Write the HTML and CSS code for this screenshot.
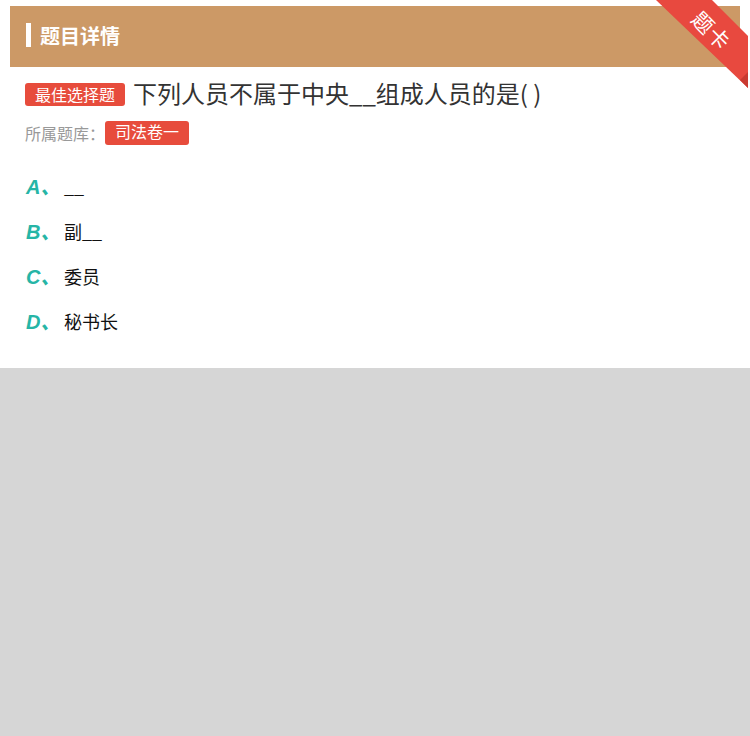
FILE: index.html
```html
<!DOCTYPE html>
<html lang="zh-CN">
<head>
    <meta charset="UTF-8">
    <meta name="viewport" content="width=device-width, initial-scale=1.0">
    <title>题目详情</title>
    <link rel="stylesheet" href="styles.css">
</head>
<body>
    <div id="page">
        <div class="header">
            <span class="bar"></span>
            <h1>题目详情</h1>
        </div>
        <svg class="ribbon" width="100" height="95" viewBox="0 0 100 95">
            <polygon points="6,0 62,0 98,36 98,88" fill="#e8493f"/>
            <polygon points="90,80 98,88 98,72" fill="#c93a31"/>
            <text x="62" y="30" transform="rotate(45 62 30)" text-anchor="middle" dominant-baseline="central" class="ribbon-text">题卡</text>
        </svg>

        <div class="content">
            <div class="question">
                <span class="tag">最佳选择题</span>
                <span class="qtext">下列人员不属于中央__组成人员的是(&nbsp;)</span>
            </div>
            <div class="source">
                <span class="label">所属题库：</span>
                <span class="tag tag-small">司法卷一</span>
            </div>

            <ul class="options">
                <li><span class="letter">A、</span><span class="otext">__</span></li>
                <li><span class="letter">B、</span><span class="otext">副__</span></li>
                <li><span class="letter">C、</span><span class="otext">委员</span></li>
                <li><span class="letter">D、</span><span class="otext">秘书长</span></li>
            </ul>
        </div>
    </div>
</body>
</html>
```

FILE: styles.css
```css
body{
    margin: 0;
    background: #d6d6d6;
    font-family: "Noto Sans CJK SC", "Liberation Sans", sans-serif;
}
#page{
    position: relative;
    width: 750px;
    height: 368px;
    background: #fff;
    padding-top: 6px;
    box-sizing: border-box;
}
.header{
    display: flex;
    align-items: center;
    margin: 0 10px;
    height: 61px;
    box-sizing: border-box;
    padding: 0 0 3px 16px;
    background: #cc9966;
}
.bar{
    width: 5px;
    height: 24px;
    background: #fff;
    margin-right: 9px;
}
.header h1{
    margin: 0;
    font-size: 20px;
    font-weight: bold;
    color: #fff;
}
.ribbon{
    position: absolute;
    top: 0;
    left: 650px;
}
.ribbon-text{
    fill: #fff;
    font-size: 21px;
    font-family: "Noto Sans CJK SC", sans-serif;
    letter-spacing: 1px;
}
.content{
    padding: 10px 25px 0 25px;
}
.question{
    display: flex;
    align-items: center;
    height: 34px;
}
.tag{
    display: inline-block;
    background: #e74c3c;
    color: #fff;
    font-size: 16px;
    line-height: 23px;
    height: 23px;
    padding: 0 10px;
    border-radius: 3px;
}
.qtext{
    margin-left: 8px;
    font-size: 24px;
    line-height: 30px;
    padding-bottom: 3px;
    color: #333;
}
.source{
    display: flex;
    align-items: center;
    margin-top: 10px;
    height: 24px;
}
.label{
    font-size: 16px;
    color: #999;
}
.tag-small{
    height: 24px;
    line-height: 20px;
}
.options{
    list-style: none;
    margin: 18px 0 0 0;
    padding: 0;
}
.options li{
    display: flex;
    align-items: center;
    height: 45px;
}
.letter{
    width: 38px;
    padding-left: 1px;
    font-family: "Liberation Sans", "Noto Sans CJK SC", sans-serif;
    font-style: italic;
    font-weight: bold;
    font-size: 20px;
    color: #26b5a6;
}
.otext{
    font-size: 18px;
    color: #111;
}
```
